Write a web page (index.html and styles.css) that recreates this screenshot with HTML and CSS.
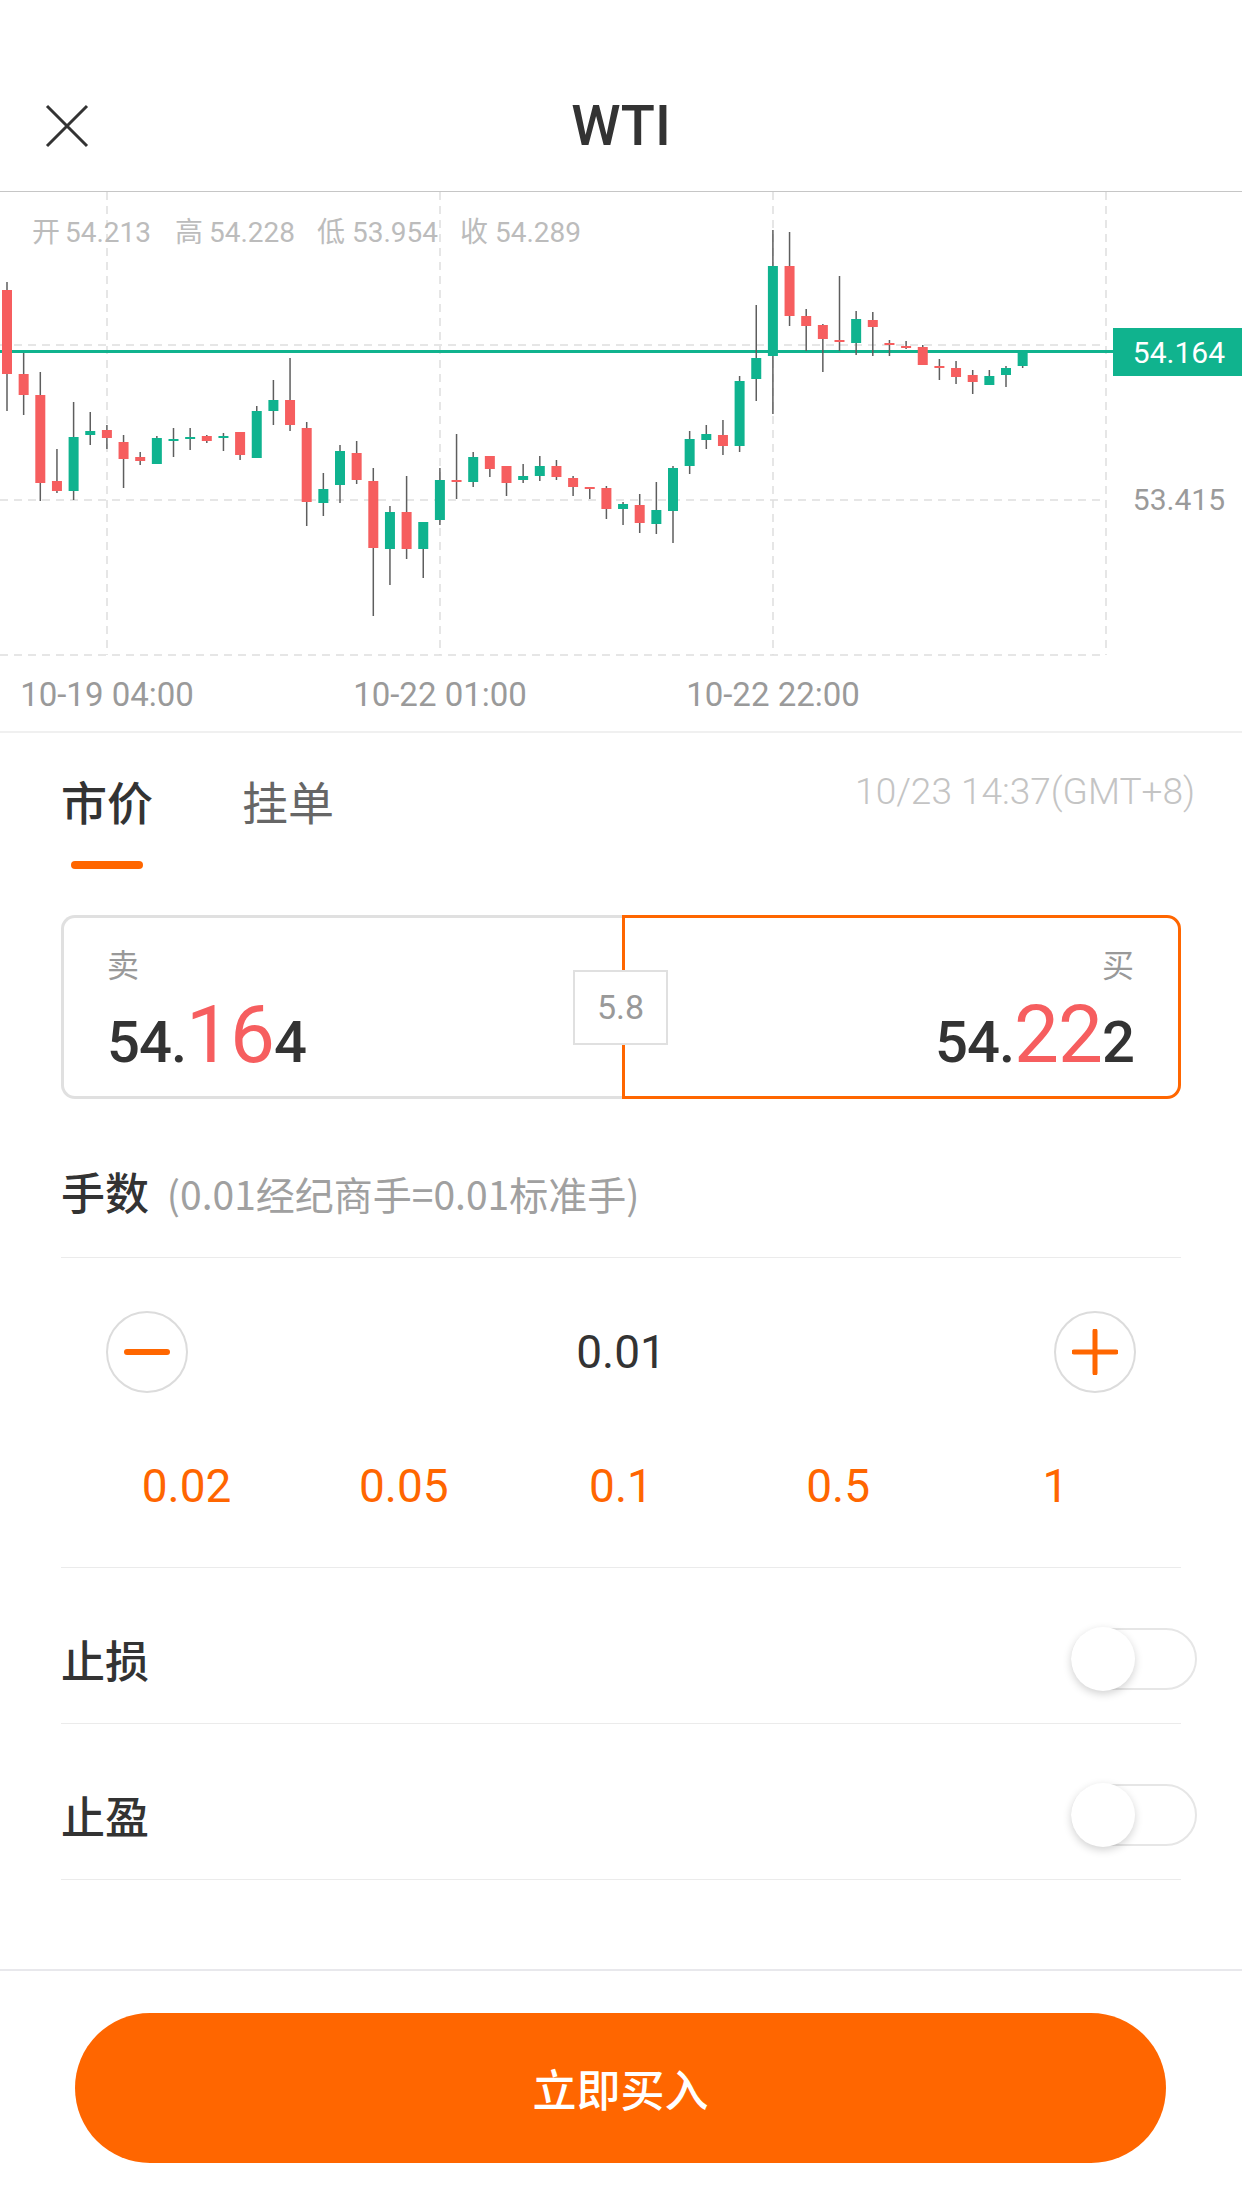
FILE: index.html
```html
<!DOCTYPE html>
<html lang="zh-CN">
<head>
    <meta charset="UTF-8">
    <meta name="viewport" content="width=device-width, initial-scale=1.0">
    <title>WTI</title>
    <link rel="stylesheet" href="styles.css">
</head>
<body>
    <header class="nav">
        <div class="nav-bar">
            <svg class="nav-close" width="44" height="44" viewBox="0 0 44 44">
                <path d="M2 2L42 42M42 2L2 42" stroke="#333" stroke-width="3" fill="none"/>
            </svg>
            <h1 class="nav-title">WTI</h1>
            <span></span>
        </div>
    </header>

    <div class="chart">
        <svg id="kline" width="1242" height="539" viewBox="0 193 1242 539">
            <g class="grid">
                <line x1="107" y1="193" x2="107" y2="656"/>
                <line x1="440" y1="193" x2="440" y2="656"/>
                <line x1="773" y1="193" x2="773" y2="656"/>
                <line x1="1106" y1="193" x2="1106" y2="656"/>
                <line x1="0" y1="346" x2="1106" y2="346"/>
                <line x1="0" y1="501" x2="1106" y2="501"/>
                <line x1="0" y1="656" x2="1106" y2="656"/>
            </g>
            <text class="ohlc" y="243">
                <tspan class="cjk" x="32">开</tspan><tspan x="65">54.213</tspan>
                <tspan class="cjk" x="175">高</tspan><tspan x="209">54.228</tspan>
                <tspan class="cjk" x="317">低</tspan><tspan x="352">53.954</tspan>
                <tspan class="cjk" x="460">收</tspan><tspan x="495">54.289</tspan>
            </text>
            <line class="price-line" x1="0" y1="352.5" x2="1113" y2="352.5"/>
            <g id="candles"></g>
            <rect class="price-tag" x="1113" y="329" width="129" height="48"/>
            <text class="price-tag-text" x="1225" y="364">54.164</text>
            <text class="axis-price" x="1225" y="511">53.415</text>
            <text class="axis-time" x="107" y="707">10-19 04:00</text>
            <text class="axis-time" x="440" y="707">10-22 01:00</text>
            <text class="axis-time" x="773" y="707">10-22 22:00</text>
        </svg>
    </div>

    <section class="order">
        <div class="tabs">
            <div class="tab tab-active">
                <span>市价</span>
                <i class="tab-bar"></i>
            </div>
            <div class="tab"><span>挂单</span></div>
            <div class="tabs-time">10/23 14:37(GMT+8)</div>
        </div>

        <div class="quote">
            <div class="quote-side quote-sell">
                <div class="quote-label">卖</div>
                <div class="quote-price">54.<em>16</em>4</div>
            </div>
            <div class="quote-side quote-buy">
                <div class="quote-label">买</div>
                <div class="quote-price">54.<em>22</em>2</div>
            </div>
            <div class="quote-spread">5.8</div>
        </div>

        <div class="lots-head">
            <span class="lots-title">手数</span>
            <span class="lots-hint">(0.01经纪商手=0.01标准手)</span>
        </div>

        <div class="stepper">
            <div class="step-btn">
                <svg width="46" height="46" viewBox="0 0 46 46">
                    <path d="M3 23H43" stroke="#ff6600" stroke-width="6" stroke-linecap="round"/>
                </svg>
            </div>
            <div class="step-value">0.01</div>
            <div class="step-btn">
                <svg width="46" height="46" viewBox="0 0 46 46">
                    <path d="M2 23H44M23 2V44" stroke="#ff6600" stroke-width="5" stroke-linecap="round"/>
                </svg>
            </div>
        </div>

        <div class="quick">
            <span>0.02</span>
            <span>0.05</span>
            <span>0.1</span>
            <span>0.5</span>
            <span>1</span>
        </div>

        <div class="switch-row">
            <span class="switch-label">止损</span>
            <span class="switch"></span>
        </div>
        <div class="switch-row">
            <span class="switch-label">止盈</span>
            <span class="switch"></span>
        </div>
    </section>

    <footer class="action">
        <button class="buy-btn">立即买入</button>
    </footer>

    <script>
    // 蜡烛数据: 颜色, 实体上沿, 实体下沿, 最高, 最低 (已换算成图上坐标)
    var data = [
        ['r',291,375,283,412],['r',375,396,354,416],['r',396,484,373,502],['r',482,492,450,494],
        ['g',438,492,403,501],['g',432,436,413,446],['r',431,439,426,450],['r',443,460,436,489],
        ['r',458,462,453,466],['g',439,465,437,465],['g',440,441,429,458],['g',438,439,429,451],
        ['r',437,442,436,444],['g',437,439,434,452],['r',433,456,433,461],['g',412,459,407,459],
        ['g',401,412,381,426],['r',401,426,359,432],['r',429,503,423,527],['g',490,504,474,517],
        ['g',452,486,446,504],['r',454,481,442,485],['r',482,549,469,617],['g',513,550,507,586],
        ['r',513,550,477,560],['g',523,550,523,579],['g',481,521,469,526],['r',481,483,435,500],
        ['g',458,483,453,488],['r',457,470,457,478],['r',467,484,467,497],['g',477,481,465,484],
        ['g',467,477,457,482],['r',467,478,461,481],['r',479,488,477,497],['r',488,489,488,500],
        ['r',489,510,487,520],['g',505,510,503,526],['r',506,524,495,534],['g',511,525,483,535],
        ['g',469,512,467,544],['g',440,467,432,475],['g',435,441,426,450],['r',436,447,421,456],
        ['g',382,447,377,453],['g',359,380,306,402],['g',267,357,231,415],['r',267,317,233,327],
        ['r',317,327,310,352],['r',326,340,325,373],['r',341,343,277,352],['g',320,344,312,356],
        ['r',321,328,313,357],['r',344,346,341,357],['r',347,349,342,350],['r',348,366,346,366],
        ['r',367,369,360,381],['r',369,378,362,385],['r',376,383,371,395],['g',377,386,371,386],
        ['g',369,376,367,388],['g',353,367,353,369]
    ];
    var ns = 'http://www.w3.org/2000/svg';
    var group = document.getElementById('candles');
    for (var i = 0; i < data.length; i++) {
        var d = data[i];
        var x = 7 + i * 16.65;
        var wick = document.createElementNS(ns, 'line');
        wick.setAttribute('x1', x);
        wick.setAttribute('x2', x);
        wick.setAttribute('y1', d[3]);
        wick.setAttribute('y2', d[4]);
        wick.setAttribute('class', 'wick');
        group.appendChild(wick);
        var body = document.createElementNS(ns, 'rect');
        body.setAttribute('x', x - 5);
        body.setAttribute('y', d[1]);
        body.setAttribute('width', 10);
        body.setAttribute('height', Math.max(d[2] - d[1], 2));
        body.setAttribute('class', d[0] == 'r' ? 'body-down' : 'body-up');
        group.appendChild(body);
    }
    </script>
</body>
</html>
```

FILE: styles.css
```css
*{
    padding: 0;
    margin: 0;
    box-sizing: border-box;
}
body{
    width: 1242px;
    background: #fff;
    color: #333;
    font-family: Roboto, "Noto Sans CJK SC", sans-serif;
}

/* 顶部导航 */
.nav{
    height: 192px;
    padding-top: 60px;
    border-bottom: 1px solid #c6c6c6;
}
.nav-bar{
    height: 131px;
    display: grid;
    grid-template-columns: 89px 1fr 89px;
    align-items: center;
}
.nav-close{
    display: block;
    margin-left: 45px;
}
.nav-title{
    font: 500 56px/1 Roboto, sans-serif;
    text-align: center;
    color: #333;
}

/* K线图 */
.chart{
    height: 541px;
    border-bottom: 2px solid #f0f0f0;
}
.chart svg{
    display: block;
}
.grid line{
    stroke: #dedede;
    stroke-width: 1.5;
    stroke-dasharray: 8 6;
}
.ohlc{
    font: 28px Roboto, sans-serif;
    fill: #bcbcbc;
}
.ohlc .cjk{
    font-family: "Noto Sans CJK SC", sans-serif;
}
.price-line{
    stroke: #10b38e;
    stroke-width: 3;
}
.wick{
    stroke: #5e5e5e;
    stroke-width: 1.5;
}
.body-down{
    fill: #f65e5f;
}
.body-up{
    fill: #0fb38f;
}
.price-tag{
    fill: #10b38e;
}
.price-tag-text{
    font: 30px Roboto, sans-serif;
    fill: #fff;
    text-anchor: end;
}
.axis-price{
    font: 30px Roboto, sans-serif;
    fill: #9a9a9a;
    text-anchor: end;
}
.axis-time{
    font: 33px Roboto, sans-serif;
    fill: #9a9a9a;
    text-anchor: middle;
}

/* 下单区域 */
.order{
    padding: 0 61px 89px;
}
.tabs{
    display: flex;
    align-items: flex-start;
    padding-top: 37px;
}
.tab{
    display: flex;
    flex-direction: column;
    align-items: center;
    font: 46px/60px "Noto Sans CJK SC", sans-serif;
    color: #666;
}
.tab + .tab{
    margin-left: 89px;
}
.tab-active{
    color: #333;
    font-weight: 500;
}
.tab-bar{
    display: block;
    width: 72px;
    height: 8px;
    margin-top: 31px;
    border-radius: 4px;
    background-color: #ff6600;
}
.tabs-time{
    margin-left: auto;
    margin-right: -14px;
    font: 300 37px/44px Roboto, sans-serif;
    color: #c4c4c4;
}

.quote{
    position: relative;
    display: flex;
    height: 184px;
    margin-top: 46px;
}
.quote-side{
    height: 184px;
}
.quote-sell{
    width: 561px;
    padding: 25px 0 0 43px;
    border: 3px solid #e0e0e0;
    border-right: 0;
    border-radius: 14px 0 0 14px;
}
.quote-buy{
    flex: 1;
    padding: 25px 44px 0 0;
    border: 3px solid #ff6600;
    border-radius: 0 14px 14px 0;
    text-align: right;
}
.quote-label{
    font: 32px/40px "Noto Sans CJK SC", sans-serif;
    color: #999;
}
.quote-price{
    margin-top: 12px;
    font: 500 58px/1 Roboto, sans-serif;
    color: #333;
    letter-spacing: -1px;
}
.quote-price em{
    font-style: normal;
    font-weight: 400;
    font-size: 80px;
    color: #f65e5f;
}
.quote-spread{
    position: absolute;
    left: 512px;
    top: 55px;
    width: 95px;
    height: 75px;
    border: 2px solid #e0e0e0;
    background: #fff;
    font: 34px/71px Roboto, sans-serif;
    color: #999;
    text-align: center;
}

.lots-head{
    margin-top: 62px;
    padding-bottom: 34px;
    border-bottom: 1px solid #ebebeb;
    font: 44px/60px "Noto Sans CJK SC", sans-serif;
}
.lots-title{
    font-weight: 500;
    color: #333;
}
.lots-hint{
    margin-left: 8px;
    font-size: 39px;
    color: #a0a0a0;
}

.stepper{
    display: flex;
    justify-content: space-between;
    align-items: center;
    padding: 53px 45px 0;
}
.step-btn{
    width: 82px;
    height: 82px;
    border: 2px solid #dcdcdc;
    border-radius: 50%;
    display: flex;
    align-items: center;
    justify-content: center;
}
.step-btn svg{
    display: block;
}
.step-value{
    font: 46px/1 Roboto, sans-serif;
    color: #333;
}

.quick{
    display: grid;
    grid-template-columns: repeat(5, 1fr);
    padding: 65px 17px 53px;
    border-bottom: 1px solid #ebebeb;
    font: 46px/56px Roboto, sans-serif;
    color: #ff6600;
    text-align: center;
}

.switch-row{
    display: flex;
    justify-content: space-between;
    align-items: center;
    height: 156px;
    padding-top: 27px;
    border-bottom: 1px solid #ebebeb;
}
.switch-label{
    font: 500 44px/60px "Noto Sans CJK SC", sans-serif;
    color: #333;
}
.switch{
    position: relative;
    width: 126px;
    height: 62px;
    margin-right: -16px;
    border: 2px solid #e6e6e6;
    border-radius: 31px;
}
.switch::before{
    content: "";
    position: absolute;
    left: -2px;
    top: -3px;
    width: 64px;
    height: 64px;
    border-radius: 50%;
    background: #fff;
    box-shadow: 0 3px 9px rgba(0, 0, 0, .18);
}

/* 底部按钮 */
.action{
    border-top: 2px solid #e8e8ec;
    padding: 42px 76px 0 75px;
}
.buy-btn{
    display: block;
    width: 100%;
    height: 150px;
    border: 0;
    border-radius: 75px;
    background-color: #ff6600;
    color: #fff;
    font: 500 44px/150px "Noto Sans CJK SC", sans-serif;
}
```
